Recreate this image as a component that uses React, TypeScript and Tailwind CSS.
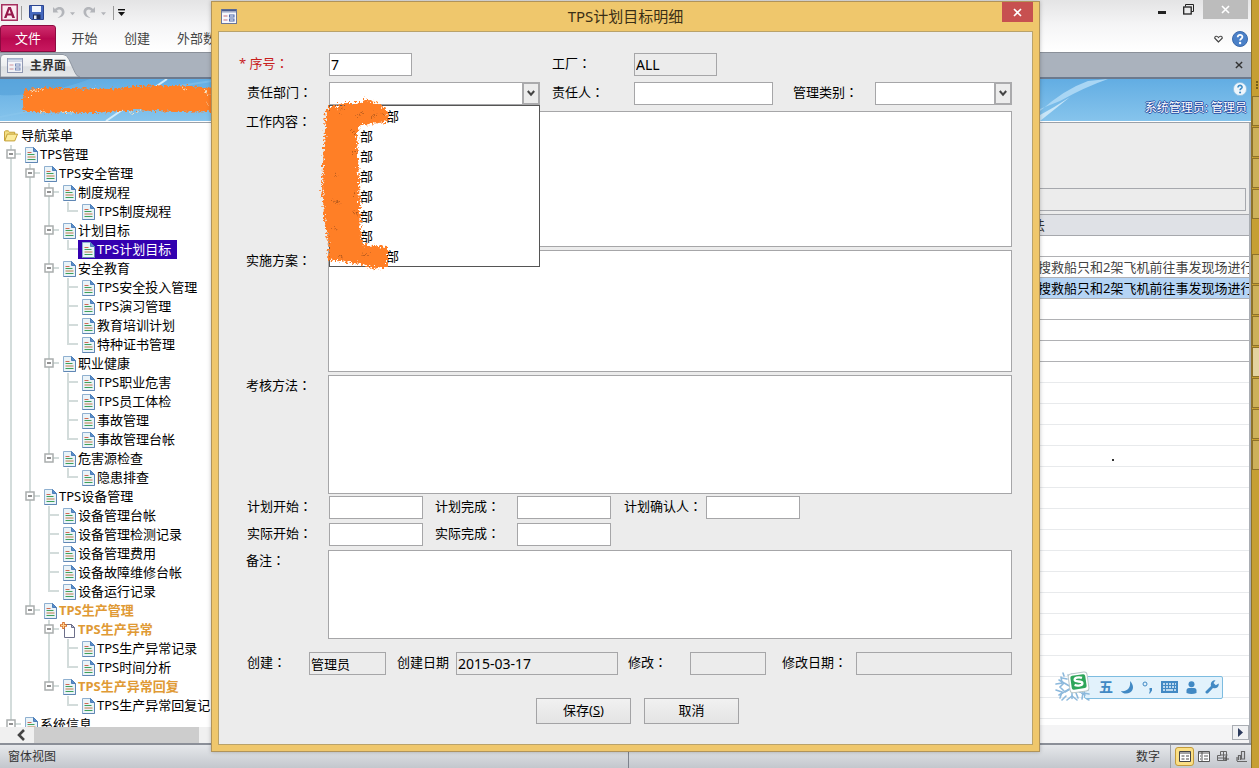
import React, { useState } from 'react';

interface TreeNode {
  label: string;
  children?: TreeNode[];
  highlight?: boolean;
  icon?: 'doc' | 'new';
}

const menu: TreeNode[] = [
  {
    label: 'TPS管理',
    children: [
      {
        label: 'TPS安全管理',
        children: [
          { label: '制度规程', children: [{ label: 'TPS制度规程' }] },
          { label: '计划目标', children: [{ label: 'TPS计划目标' }] },
          {
            label: '安全教育',
            children: [
              { label: 'TPS安全投入管理' },
              { label: 'TPS演习管理' },
              { label: '教育培训计划' },
              { label: '特种证书管理' },
            ],
          },
          {
            label: '职业健康',
            children: [
              { label: 'TPS职业危害' },
              { label: 'TPS员工体检' },
              { label: '事故管理' },
              { label: '事故管理台帐' },
            ],
          },
          { label: '危害源检查', children: [{ label: '隐患排查' }] },
        ],
      },
      {
        label: 'TPS设备管理',
        children: [
          { label: '设备管理台帐' },
          { label: '设备管理检测记录' },
          { label: '设备管理费用' },
          { label: '设备故障维修台帐' },
          { label: '设备运行记录' },
        ],
      },
      {
        label: 'TPS生产管理',
        highlight: true,
        children: [
          {
            label: 'TPS生产异常',
            highlight: true,
            icon: 'new',
            children: [{ label: 'TPS生产异常记录' }, { label: 'TPS时间分析' }],
          },
          {
            label: 'TPS生产异常回复',
            highlight: true,
            children: [{ label: 'TPS生产异常回复记' }],
          },
        ],
      },
    ],
  },
  { label: '系统信息', children: [] },
];

const gridRows = [
  { text: '', strong: true },
  { text: '搜救船只和2架飞机前往事发现场进行', strong: true },
  { text: '搜救船只和2架飞机前往事发现场进行', strong: true, selected: true },
  { text: '', strong: true },
  { text: '', strong: true },
  { text: '', strong: true },
  ...Array.from({ length: 17 }, () => ({ text: '', strong: false })),
];

/* ---------- icons ---------- */

const DocIcon = () => (
  <svg width="13" height="16" viewBox="0 0 13 16" className="shrink-0">
    <path d="M.5.5h8l4 4v11H.5z" fill="#eaf3f8" stroke="#8fb0d0" />
    <path d="M12.500 5v10.500H.5" fill="none" stroke="#5f86b4" />
    <path d="M8.500.5v4h4z" fill="#5b8fcb" stroke="#4d7fba" />
    <path d="M2.500 5.500h4" stroke="#cf6a52" />
    <path d="M2.500 7.500h7M2.500 12.500h8" stroke="#3fa15c" />
    <path d="M2.500 10h8" stroke="#c07a4a" />
  </svg>
);

const NewDocIcon = () => (
  <svg width="16" height="16" viewBox="0 0 16 16" className="-ml-[3px] shrink-0">
    <path d="M4.500 2.500h7l3 3v10h-10z" fill="#fff" stroke="#6d6f8a" />
    <path d="M11.500 2.500v3h3z" fill="#b9bfd4" stroke="#6d6f8a" />
    <path d="M3.500 0v7M0 3.500h7" stroke="#d9732e" strokeWidth="2.600" />
    <path d="M3.500 1v5M1 3.500h5" stroke="#ffd08a" strokeWidth="1" />
  </svg>
);

const FolderIcon = () => (
  <svg width="14" height="13" viewBox="0 0 15 13" className="shrink-0">
    <path d="M.5 12V2.500l1-1h3l1.500 1.500h5.500V5" fill="#f3df86" stroke="#bf9a2c" />
    <path d="M.8 12.300 3.500 5h11l-3 7.300z" fill="#fbeb9c" stroke="#bf9a2c" />
  </svg>
);

const FormIcon = ({ faded = false }: { faded?: boolean }) => (
  <svg width="16" height="15" viewBox="0 0 16 15" className={faded ? 'shrink-0 opacity-70' : 'shrink-0'}>
    <rect x=".5" y=".5" width="15" height="14" fill="#f7f8fd" stroke="#6a769a" />
    <path d="M1 1.500h14" stroke={faded ? '#9db0d0' : '#4a5c8e'} strokeWidth="2" />
    <path d="M1 3.500h14" stroke="#c3cbe0" />
    <path d="M2.500 7h4M2.500 11h4" stroke="#c56f7a" />
    <rect x="8.500" y="6" width="4.500" height="2" fill="#fff" stroke="#4a66a8" />
    <rect x="8.500" y="10" width="4.500" height="2" fill="#fff" stroke="#4a66a8" />
  </svg>
);

const AccessIcon = () => (
  <svg width="17" height="17" viewBox="0 0 17 17">
    <rect x=".75" y=".75" width="15.500" height="15.500" fill="#fbeaf1" stroke="#a5305f" strokeWidth="1.500" />
    <path d="M3 14 7.200 3h2.600L14 14h-2.700l-.9-2.500H6.400L5.500 14zM7.100 9.500h2.700L8.500 5.600z" fill="#97194c" fillRule="evenodd" />
  </svg>
);

const SaveIcon = () => (
  <svg width="15" height="15" viewBox="0 0 15 15">
    <path d="M.5.5h14v14h-12l-2-2z" fill="#4568bd" stroke="#2c4590" />
    <path d="M3 1h9v6H3z" fill="#f2f6fd" />
    <path d="M4 9.500h7.500V14H4z" fill="#1f2c55" />
    <path d="M5 10.500h2.500V14H5z" fill="#e6ecf8" />
  </svg>
);

const UndoIcon = ({ flip = false }: { flip?: boolean }) => (
  <svg width="13" height="13" viewBox="0 0 13 13" className={flip ? '-scale-x-100' : ''}>
    <path d="M1 1v5.500h5.500L4.700 4.700C7 2.600 10 3.600 9.800 6.500 9.700 8.600 8 10.300 5.500 12 9.500 11.500 12.500 9.500 12.500 6 12.500 1.500 7-.8 3 3z" fill="#b3b5ba" />
  </svg>
);

const Caret = ({ dark = false }: { dark?: boolean }) => (
  <svg width={dark ? 7 : 5} height="8" viewBox="0 0 7 8">
    {dark && <path d="M0 .7h7" stroke="#111" strokeWidth="1.400" />}
    <path d="M0 3h7L3.500 7z" fill={dark ? '#111' : '#b3b5ba'} />
  </svg>
);

const HelpIcon = ({ light = false }: { light?: boolean }) => (
  <svg width={light ? 14 : 16} height={light ? 14 : 16} viewBox="0 0 16 16">
    <circle cx="8" cy="8" r="7.500" fill={light ? '#eef6fc' : '#4a80c8'} stroke={light ? '#8fbfe0' : '#3a68aa'} />
    <path d="M5.700 6.200C5.700 3 10.500 3.200 10.400 6 10.300 7.700 8.100 7.700 8.100 9.500" fill="none" stroke={light ? '#3d8bc4' : '#fff'} strokeWidth="1.800" />
    <circle cx="8.100" cy="12" r="1.200" fill={light ? '#3d8bc4' : '#fff'} />
  </svg>
);

const CloseIcon = ({ size = 9 }: { size?: number }) => (
  <svg width={size} height={size} viewBox="0 0 9 9">
    <path d="M1 1l7 7M8 1 1 8" stroke="currentColor" strokeWidth="1.600" />
  </svg>
);

const Snowflake = () => (
  <svg width="40" height="34" viewBox="0 0 40 34">
    <g stroke="#8db9dc" strokeWidth="1.600" fill="none" strokeLinecap="round">
      <path d="M18 4v26M5 10l26 15M5 25l26-15" strokeDasharray="5 1.500" />
      <path d="M14 5l4 4 4-4M13 30l5-4 5 4M2 14l6-1-1-6M2 20l6 2-2 6M28 29l1-6 6 1" />
      <path d="M10 13l-4 4 4 4M13 9l-5-1M12 26l-4 4M24 28l-2-5M16 19l-5 3M9 3l1 3M33 29l2 1M28 20l6 0" />
    </g>
    <g transform="rotate(-8 24 12)">
      <rect x="15" y="3" width="19" height="19" rx="3" fill="#fff" stroke="#b9c7c9" />
      <rect x="17" y="5" width="15" height="14" rx="2" fill="#2fa65a" />
      <path d="M28.500 8.500c-3-1.700-8-1.300-7.500 1.300.4 2.300 7 1.300 7.200 3.700.2 2.500-5 2.700-8 .9" fill="none" stroke="#fff" strokeWidth="2.300" />
    </g>
  </svg>
);

/* ---------- navigation tree ---------- */

type Cell = 'blank' | 'line' | 'tee' | 'elbow' | 'box' | 'boxEnd';

const TreeCell = ({ kind }: { kind: Cell }) => {
  const box = kind === 'box' || kind === 'boxEnd';
  const full = kind === 'line' || kind === 'tee' || kind === 'box';
  return (
    <svg width="19" height="19" viewBox="0 0 19 19" className="shrink-0">
      <g stroke="#d3dcdb" strokeWidth="2">
        {kind !== 'blank' && <path d={full ? 'M9 0v19' : 'M9 0v10'} />}
        {kind !== 'blank' && kind !== 'line' && <path d="M9 9h10" />}
      </g>
      {box && <rect x="5" y="5" width="8" height="8" fill="#fff" stroke="#a9adad" strokeWidth="1.500" />}
      {box && <path d="M7 9h4" stroke="#555" strokeWidth="1.300" />}
    </svg>
  );
};

interface BranchProps {
  nodes: TreeNode[];
  cells: Cell[];
  selected: string;
  onSelect: (label: string) => void;
}

const Branch = ({ nodes, cells, selected, onSelect }: BranchProps) => (
  <ul>
    {nodes.map((node, i) => {
      // the top level runs on below the visible area
      const last = cells.length > 0 && i === nodes.length - 1;
      const own: Cell = node.children ? (last ? 'boxEnd' : 'box') : last ? 'elbow' : 'tee';
      const isSelected = node.label === selected;
      return (
        <li key={node.label}>
          <div className="flex h-[19px]">
            {cells.map((c, k) => (
              <TreeCell key={k} kind={c} />
            ))}
            <TreeCell kind={own} />
            <button
              onClick={() => onSelect(node.label)}
              className={`flex items-center gap-[2px] pl-1 pr-[6px] whitespace-nowrap ${
                isSelected ? 'bg-[#3300b0] text-white' : node.highlight ? 'font-bold text-[#e09a35]' : 'text-black'
              }`}
            >
              {node.icon === 'new' ? <NewDocIcon /> : <DocIcon />}
              {node.label}
            </button>
          </div>
          {node.children && (
            <Branch nodes={node.children} cells={[...cells, last ? 'blank' : 'line']} selected={selected} onSelect={onSelect} />
          )}
        </li>
      );
    })}
  </ul>
);

const Sidebar = () => {
  const [selected, setSelected] = useState('TPS计划目标');
  return (
    <aside className="flex w-[220px] shrink-0 flex-col bg-white">
      <nav className="min-h-0 flex-1 overflow-hidden pl-[2px] pt-[3px] text-[13px] leading-[19px]">
        <div className="flex h-[19px] items-center gap-[3px] pl-[2px]">
          <FolderIcon />
          导航菜单
        </div>
        <Branch nodes={menu} cells={[]} selected={selected} onSelect={setSelected} />
      </nav>
      <div className="flex h-[16px] shrink-0 items-center bg-[#f0f0f0] pl-[16px]">
        <button aria-label="向左滚动">
          <svg width="10" height="12" viewBox="0 0 10 12">
            <path d="M8 1 3 6l5 5" fill="none" stroke="#444" strokeWidth="2.600" />
          </svg>
        </button>
        <div className="ml-2 h-full w-[165px] bg-[#cdcdcd]" />
      </div>
    </aside>
  );
};

/* ---------- window chrome ---------- */

const TitleBar = () => (
  <div className="flex h-[25px] shrink-0 items-center bg-gradient-to-b from-[#e4e4e5] to-[#f5f5f6] pl-px">
    <AccessIcon />
    <span className="ml-[3px] h-[14px] w-px bg-[#9a9a9a]" />
    <button className="ml-[7px]" aria-label="保存文件"><SaveIcon /></button>
    <button className="ml-2" aria-label="撤消"><UndoIcon /></button>
    <span className="ml-[5px]"><Caret /></span>
    <button className="ml-2" aria-label="恢复"><UndoIcon flip /></button>
    <span className="ml-[5px]"><Caret /></span>
    <span className="ml-[7px] h-[14px] w-px bg-[#9a9a9a]" />
    <button className="ml-1" aria-label="自定义工具栏"><Caret dark /></button>
    <div className="ml-auto flex h-full items-start">
      <button className="mr-[17px] mt-[11px] h-[3px] w-[8px] bg-[#222]" aria-label="最小化" />
      <button className="mr-[9px] mt-1" aria-label="还原">
        <svg width="11" height="11" viewBox="0 0 11 11">
          <path d="M2.500 2.500v-2h8v7h-2" fill="none" stroke="#222" />
          <rect x=".7" y="3" width="7.500" height="7" fill="none" stroke="#222" strokeWidth="1.300" />
        </svg>
      </button>
      <button className="mr-[3px] flex h-[19px] w-[45px] items-center justify-center bg-[#bcbcbc] text-white" aria-label="关闭">
        <CloseIcon />
      </button>
    </div>
  </div>
);

const Ribbon = () => (
  <div className="flex h-[28px] shrink-0 items-stretch border-b border-[#8a9099] bg-gradient-to-b from-[#f5f5f6] to-white text-[13px] text-[#444]">
    <button className="w-[56px] rounded-t-[3px] border border-[#8c0b40] bg-gradient-to-b from-[#cf2a6e] via-[#b8084f] to-[#c8185f] text-white">文件</button>
    <button className="w-[57px]">开始</button>
    <button className="w-[48px]">创建</button>
    <button className="w-[84px]">外部数据</button>
    <div className="ml-auto flex items-center gap-[9px] pr-[3px]">
      <svg width="9" height="8" viewBox="0 0 9 8">
        <path d="M4.500 7 .8 3.200C.5 1 3 .5 4.500 2.500 6 .5 8.500 1 8.200 3.200z" fill="none" stroke="#444" strokeWidth="1.200" />
      </svg>
      <button aria-label="帮助"><HelpIcon /></button>
    </div>
  </div>
);

const DocumentTabs = () => (
  <div className="flex h-[26px] shrink-0 items-end justify-between border-b-2 border-[#6c7a8e] bg-[#aab2bd]">
    <div className="relative flex h-[23px] w-[81px] items-center pl-[7px]">
      <svg width="81" height="23" viewBox="0 0 81 23" className="absolute left-0 top-0">
        <defs>
          <linearGradient id="tab" x1="0" y1="0" x2="0" y2="1">
            <stop offset="0" stopColor="#fafbfb" />
            <stop offset=".5" stopColor="#ebedef" />
            <stop offset=".55" stopColor="#dcdfe2" />
            <stop offset="1" stopColor="#e6e8ea" />
          </linearGradient>
        </defs>
        <path d="M.5 23V4Q.5.5 4 .5h59q4 0 6 5l6 13q1.500 4 5 4.500z" fill="url(#tab)" stroke="#8f97a2" />
      </svg>
      <span className="relative flex items-center gap-[7px] text-[12px] font-bold text-[#333]">
        <FormIcon faded />
        主界面
      </span>
    </div>
    <button className="mb-[8px] mr-[8px] text-[#333]" aria-label="关闭选项卡"><CloseIcon size={8} /></button>
  </div>
);

const Banner = () => (
  <header className="relative h-[43px] shrink-0 overflow-hidden border-b border-white bg-gradient-to-b from-[#62ade3] to-[#86c4ec]">
    <svg width="216" height="42" viewBox="0 0 216 42" className="absolute left-0 top-0">
      <defs>
        <filter id="brush" x="-10%" y="-20%" width="120%" height="140%">
          <feTurbulence type="fractalNoise" baseFrequency=".4" numOctaves="2" seed="4" />
          <feDisplacementMap in="SourceGraphic" scale="7" xChannelSelector="R" yChannelSelector="G" />
        </filter>
      </defs>
      <path d="M0 0h90Q40 18 0 16z" fill="#4d9cd6" opacity=".5" />
      <path d="M0 38Q90 20 212 2" fill="none" stroke="#8cc7ee" strokeWidth="2" opacity=".5" />
      <path d="M106 42 167 0" stroke="#d3ecfa" strokeWidth="2" />
      <g filter="url(#brush)">
        <path d="M24 12Q30 8 60 9l50 1 25-3 40-1 41 3v23l-41 1-40-2-40 3-70-1Q23 32 23 22z" fill="#ff7f27" />
        <path d="M30 12l12-2M60 33l14 1M92 9l7 1M130 34l9-1M182 9l4 2M205 11l3 5M206 24l4 3M28 20l3-3M40 33l5-1" stroke="#f4e5c8" strokeWidth="1" fill="none" />
      </g>
    </svg>
    <svg width="211" height="42" viewBox="0 0 211 42" className="absolute right-0 top-0">
      <path d="M0 32Q25 10 48 2l20-2Q45 8 20 22L0 30z" fill="#a9d6f4" />
      <path d="M0 36Q15 28 30 18L0 42z" fill="#c9e6f8" />
    </svg>
    <div className="relative flex h-full flex-col items-end justify-between pb-[5px] pr-1 pt-[3px]">
      <button aria-label="使用帮助"><HelpIcon light /></button>
      <span className="text-[12px] leading-[16px] text-white [text-shadow:1px_0_#2b4fa5,-1px_0_#2b4fa5,0_1px_#2b4fa5,0_-1px_#2b4fa5]">
        系统管理员: 管理员
      </span>
    </div>
  </header>
);

const DataPane = () => (
  <main className="relative flex min-w-0 flex-1 flex-col border-r-2 border-[#a9adb3] bg-[#ececec]">
    <div className="pr-[3px] pt-[65px]">
      <input readOnly aria-label="筛选" className="block h-[23px] w-full border border-[#a6a8ad] bg-[#ececec]" />
    </div>
    <div className="mt-[3px] min-h-0 flex-1 overflow-hidden bg-white">
      <table className="w-full table-fixed border-separate border-spacing-0 text-[13px] leading-[18px]">
        <thead>
          <tr>
            <th className="h-[22px] border-y border-[#a6a8ad] bg-[#dfe1e6] p-0" />
            <th className="h-[22px] w-[219px] border-y border-[#a6a8ad] bg-[#dfe1e6] p-0 pl-[2px] text-left font-normal text-[#333]">法</th>
          </tr>
        </thead>
        <tbody>
          {gridRows.map((row, i) => (
            <tr key={i} className={'selected' in row && row.selected ? 'bg-[#b5d4f5] text-black' : 'text-[#444]'}>
              <td className={`h-[21px] border-b p-0 ${row.strong ? 'border-[#b0b1b4]' : 'border-[#e8eaec]'}`} />
              <td
                className={`h-[21px] overflow-hidden whitespace-nowrap border-b p-0 pl-2 ${
                  row.strong ? 'border-[#b0b1b4]' : 'border-[#e8eaec]'
                }`}
              >
                {row.text}
              </td>
            </tr>
          ))}
        </tbody>
      </table>
    </div>
    <div className="flex h-[18px] shrink-0 justify-end bg-[#f4f4f5]">
      <button className="flex h-[15px] w-[17px] items-center justify-center border border-[#a9adb3] bg-[#f0f1f3]" aria-label="向右滚动">
        <svg width="5" height="9" viewBox="0 0 5 9"><path d="M0 0v9l5-4.500z" fill="#2c3a5c" /></svg>
      </button>
    </div>
    <span className="absolute bottom-[282px] right-[135px] h-[2px] w-[2px] bg-[#333]" />
  </main>
);

const StatusBar = () => (
  <footer className="flex h-[25px] shrink-0 items-center border-t-2 border-[#8b8f98] bg-gradient-to-b from-[#e6e8eb] to-[#c3c7cd] pl-2 pr-[3px] text-[12px] text-[#333]">
    <div className="flex h-full flex-1 items-center">窗体视图</div>
    <span className="h-full w-px bg-[#7d828c]" />
    <div className="flex h-full flex-1 items-center justify-end">
      <span>数字</span>
      <span className="ml-[10px] h-full w-px bg-[#9a9ea6]" />
      <div className="ml-1 flex items-center gap-[4px]">
        <button className="flex h-[19px] w-[19px] items-center justify-center rounded-[3px] border border-[#c29a3a] bg-[#fbdf84]" aria-label="窗体视图按钮">
          <svg width="12" height="11" viewBox="0 0 12 11">
            <path d="M.5.5h11v10H.5z" fill="#fff" stroke="#444" /><path d="M1 2h10M2.500 5h3M2.500 8h3M7 5h3M7 8h3" stroke="#444" />
          </svg>
        </button>
        <button aria-label="数据表视图">
          <svg width="12" height="11" viewBox="0 0 12 11">
            <path d="M.5.5h11v10H.5z" fill="#fff" stroke="#555" /><path d="M1 2h10M4 1v9M2 5h1M2 8h1M6 5h4M6 8h4" stroke="#555" />
          </svg>
        </button>
        <button className="ml-[3px]" aria-label="布局视图">
          <svg width="12" height="11" viewBox="0 0 12 11">
            <path d="M3.500.5h6v9h-9v-5h3zM3.500 4h7M6.500 1v9M1 7h9" fill="none" stroke="#666" /><path d="M9 5v5M7 8h5" stroke="#555" />
          </svg>
        </button>
        <button className="ml-[3px]" aria-label="设计视图">
          <svg width="12" height="11" viewBox="0 0 12 11">
            <path d="M1 10.500h10M2.500 9V4.500h2V9M5.500 8V.5h3V8zM1 6v4" fill="none" stroke="#666" strokeWidth="1.200" />
          </svg>
        </button>
      </div>
    </div>
  </footer>
);

const SideDock = () => (
  <div className="flex w-[8px] shrink-0 flex-col overflow-hidden border-l border-[#8d722a] bg-[#c69f33] pt-[81px]">
    <div className="h-[15px] pl-[4px]">
      <div className="h-[8px] border-l-2 border-dotted border-[#7a5f17]" />
    </div>
    {['a', 'b', 'c', 'd', 'gap', 'e', 'f', 'g', 'active', 'h', 'i', 'j'].map((k) => (
      <div
        key={k}
        className={
          k === 'gap'
            ? 'h-[34px]'
            : `mb-px h-[30px] border border-r-0 border-[#8d722a] ${k === 'active' ? 'bg-[#e3d3a0]' : 'bg-[#cdb15a]'}`
        }
      />
    ))}
  </div>
);

const ImeBar = () => (
  <div className="absolute bottom-[64px] right-[36px] flex items-center">
    <div className="relative z-10 -mr-[10px]"><Snowflake /></div>
    <div className="flex h-[23px] items-center gap-[8px] rounded-[2px] border border-[#7dbce0] bg-[#e2f2fc] pl-[14px] pr-[3px] text-[14px] leading-none font-bold text-[#4189c4]">
      <span>五</span>
      <svg width="13" height="13" viewBox="0 0 13 13"><path d="M9 0c4 4 4 9 0 11.500-3 1.800-7 1.500-9-1.500C6 11 10 7 9 0z" fill="#4189c4" /></svg>
      <svg width="11" height="13" viewBox="0 0 11 13">
        <circle cx="3" cy="3" r="2" fill="none" stroke="#4189c4" />
        <path d="M7.500 7h2.500v2.500L8 12.500H7L8 9.500h-.5z" fill="#4189c4" />
      </svg>
      <svg width="17" height="12" viewBox="0 0 17 12">
        <rect width="17" height="12" fill="#4189c4" />
        <path d="M2 3h13M2 6h13" stroke="#e2f2fc" strokeWidth="1.600" strokeDasharray="2 1" /><path d="M2 9h2M5 9h7M13 9h2" stroke="#e2f2fc" strokeWidth="1.600" />
      </svg>
      <svg width="11" height="13" viewBox="0 0 11 13"><circle cx="5.500" cy="3.200" r="3" fill="#4189c4" /><path d="M.5 12V9.500Q.5 7 3 7h5q2.500 0 2.500 2.500V12Q5.500 14 .5 12z" fill="#4189c4" /></svg>
      <svg width="14" height="14" viewBox="0 0 14 14"><path d="M10.500.3 8.500 3l2.300 2.300L13.700 3.500C14.200 7 11 9.300 8 8L3 13.200Q1 14 .5 12.500.2 11.500 1 11l5-5C5 2.500 7.500 0 10.500.3z" fill="#4189c4" /></svg>
    </div>
  </div>
);

/* ---------- dialog ---------- */

const Colon = () => <span className="font-['Noto_Sans_CJK_JP',sans-serif]">：</span>;

interface FieldProps {
  id: string;
  label: string;
  labelClass?: string;
  className?: string;
  value?: string;
  readOnly?: boolean;
  required?: boolean;
  colon?: boolean;
}

const Label = ({ id, label, className = 'w-[90px] pl-2', required = false, colon = true }: { id: string; label: string; className?: string; required?: boolean; colon?: boolean }) => (
  <label htmlFor={id} className={`shrink-0 whitespace-nowrap leading-[20px] ${required ? 'w-[90px] text-[#c8201c]' : className}`}>
    {required && '* '}
    {label}
    {colon && <Colon />}
  </label>
);

const Field = ({ id, label, labelClass, className = '', value = '', readOnly = false, required, colon }: FieldProps) => (
  <>
    <Label id={id} label={label} className={labelClass} required={required} colon={colon} />
    <input
      id={id}
      defaultValue={value}
      readOnly={readOnly}
      className={`h-[23px] border border-[#a6a6a8] px-px outline-none ${readOnly ? 'bg-[#ececec]' : 'bg-white'} ${className}`}
    />
  </>
);

const SelectBox = ({ id }: { id: string }) => (
  <div className="relative">
    <select id={id} className="block h-[23px] w-full appearance-none border border-[#a6a6a8] bg-white outline-none">
      <option />
    </select>
    <span className="pointer-events-none absolute right-0 top-0 flex h-[23px] w-[18px] items-center justify-center border-2 border-[#aaaaac] bg-[#ececec]">
      <svg width="8" height="7" viewBox="0 0 8 7"><path d="M.8 1 4 4.700 7.200 1" fill="none" stroke="#444" strokeWidth="2" /></svg>
    </span>
  </div>
);

const TextBlock = ({ id, label, className }: { id: string; label: string; className: string }) => (
  <div className="flex items-start">
    <Label id={id} label={label} className="w-[89px] pl-[7px]" />
    <textarea id={id} className={`min-w-0 flex-1 resize-none border border-[#a6a6a8] bg-white outline-none ${className}`} />
  </div>
);

const DepartmentList = () => (
  <>
    <ul role="listbox" aria-label="部门" className="absolute left-0 top-full z-10 w-full border border-[#555] bg-white leading-[20px]">
      {[0, 1, 2, 3, 4, 5, 6, 7].map((i) => (
        <li key={i} role="option" aria-selected={false} className={i % 7 === 0 ? 'pl-[56px]' : 'pl-[30px]'}>
          部
        </li>
      ))}
    </ul>
    <svg width="80" height="184" viewBox="0 0 80 184" className="absolute -left-[10px] top-[12px] z-20">
      <defs>
        <filter id="crayon" x="-10%" y="-10%" width="120%" height="120%">
          <feTurbulence type="fractalNoise" baseFrequency=".45" numOctaves="3" seed="9" />
          <feDisplacementMap in="SourceGraphic" scale="10" xChannelSelector="R" yChannelSelector="G" />
        </filter>
      </defs>
      <g filter="url(#crayon)">
        <path d="M16 14 24 9l16 0 8-4 9 4 8 4 5 8-2 7-27 3-3 6 2 50 2 56 3 8 24 2v20l-13 2-14-5-33-4 1-14-5-30-2-30 2-40 2-36 9-6z" fill="#ff7f27" />
        <path d="M20 18l4-2M38 21l7-2M52 23l5-3M63 18l2 3M32 37l5 2M34 59l4 1M16 80l6 4M34 99l4 1M14 106l7 4M34 119l5 1M14 134l6 3M42 160l8 1M20 162l5 1" stroke="#a4521c" strokeWidth=".8" />
      </g>
    </svg>
  </>
);

const PlanDialog = () => (
  <div role="dialog" aria-labelledby="dialog-title" className="absolute left-[211px] right-[219px] top-px z-30 border border-[#b0935a] bg-[#efc76c] px-[6px] pb-[6px] shadow-[0_0_4px_rgba(0,0,0,0.25)]">
    <div className="flex h-[29px] items-center pl-[3px]">
      <FormIcon />
      <h1 id="dialog-title" className="flex-1 pl-[12px] text-center text-[15px] text-[#3b2f15]">TPS计划目标明细</h1>
      <button className="flex h-[20px] w-[31px] items-center justify-center self-start bg-[#c75050] text-white" aria-label="关闭对话框">
        <CloseIcon />
      </button>
    </div>
    <form className="border border-[#b9a26a] bg-[#ececec] pb-[20px] pl-[20px] pr-[20px] pt-[21px] text-[13px] text-black" onSubmit={(e) => e.preventDefault()}>
      <div className="flex items-start">
        <Field id="no" label="序号" required value="7" className="w-[83px] text-[14px]" />
        <Field id="plant" label="工厂" labelClass="ml-[140px] w-[82px]" value="ALL" readOnly className="w-[83px] text-[14px]" />
      </div>
      <div className="mt-[6px] flex items-start">
        <Label id="dept" label="责任部门" />
        <div className="relative w-[211px]">
          <SelectBox id="dept" />
          <DepartmentList />
        </div>
        <Field id="owner" label="责任人" labelClass="ml-[12px] w-[82px]" className="w-[139px]" />
        <Label id="kind" label="管理类别" className="ml-[20px] w-[82px]" />
        <div className="flex-1"><SelectBox id="kind" /></div>
      </div>
      <div className="mt-[6px] flex flex-col gap-[3px]">
        <TextBlock id="content" label="工作内容" className="h-[136px]" />
        <TextBlock id="plan" label="实施方案" className="h-[122px]" />
        <TextBlock id="check" label="考核方法" className="h-[119px]" />
      </div>
      <div className="mt-[2px] flex flex-col gap-1">
        <div className="flex items-start">
          <Field id="ps" label="计划开始" className="w-[94px]" />
          <Field id="pe" label="计划完成" labelClass="ml-[12px] w-[82px]" className="w-[94px]" />
          <Field id="pc" label="计划确认人" labelClass="ml-[13px] w-[82px]" className="w-[94px]" />
        </div>
        <div className="flex items-start">
          <Field id="as" label="实际开始" className="w-[94px]" />
          <Field id="ae" label="实际完成" labelClass="ml-[12px] w-[82px]" className="w-[94px]" />
        </div>
        <TextBlock id="remark" label="备注" className="h-[89px]" />
      </div>
      <div className="mt-[13px] flex items-start">
        <Field id="cb" label="创建" labelClass="w-[70px] pl-2" value="管理员" readOnly className="w-[77px]" />
        <Field id="cd" label="创建日期" colon={false} labelClass="ml-[11px] w-[59px]" value="2015-03-17" readOnly className="w-[162px] text-[14px]" />
        <Field id="mb" label="修改" labelClass="ml-[10px] w-[62px]" readOnly className="w-[76px]" />
        <Field id="md" label="修改日期" labelClass="ml-[16px] w-[74px]" readOnly className="min-w-0 flex-1" />
      </div>
      <div className="mt-[23px] flex justify-center gap-[13px] pl-[24px]">
        <button type="submit" className="h-[26px] w-[95px] border border-[#a3a3a5] bg-gradient-to-b from-[#f1f1f1] to-[#e4e4e4]">
          保存(<span className="underline">S</span>)
        </button>
        <button type="button" className="h-[26px] w-[95px] border border-[#a3a3a5] bg-gradient-to-b from-[#f1f1f1] to-[#e4e4e4]">取消</button>
      </div>
    </form>
  </div>
);

const App = () => (
  <div className="relative flex h-screen w-full overflow-hidden bg-white font-['Noto_Sans','Noto_Sans_CJK_SC',sans-serif]">
    <div className="relative flex min-w-0 flex-1 flex-col">
      <TitleBar />
      <Ribbon />
      <DocumentTabs />
      <Banner />
      <div className="flex min-h-0 flex-1 border-t border-[#9aa0a8]">
        <Sidebar />
        <DataPane />
      </div>
      <StatusBar />
    </div>
    <SideDock />
    <PlanDialog />
    <ImeBar />
  </div>
);

export default App;
